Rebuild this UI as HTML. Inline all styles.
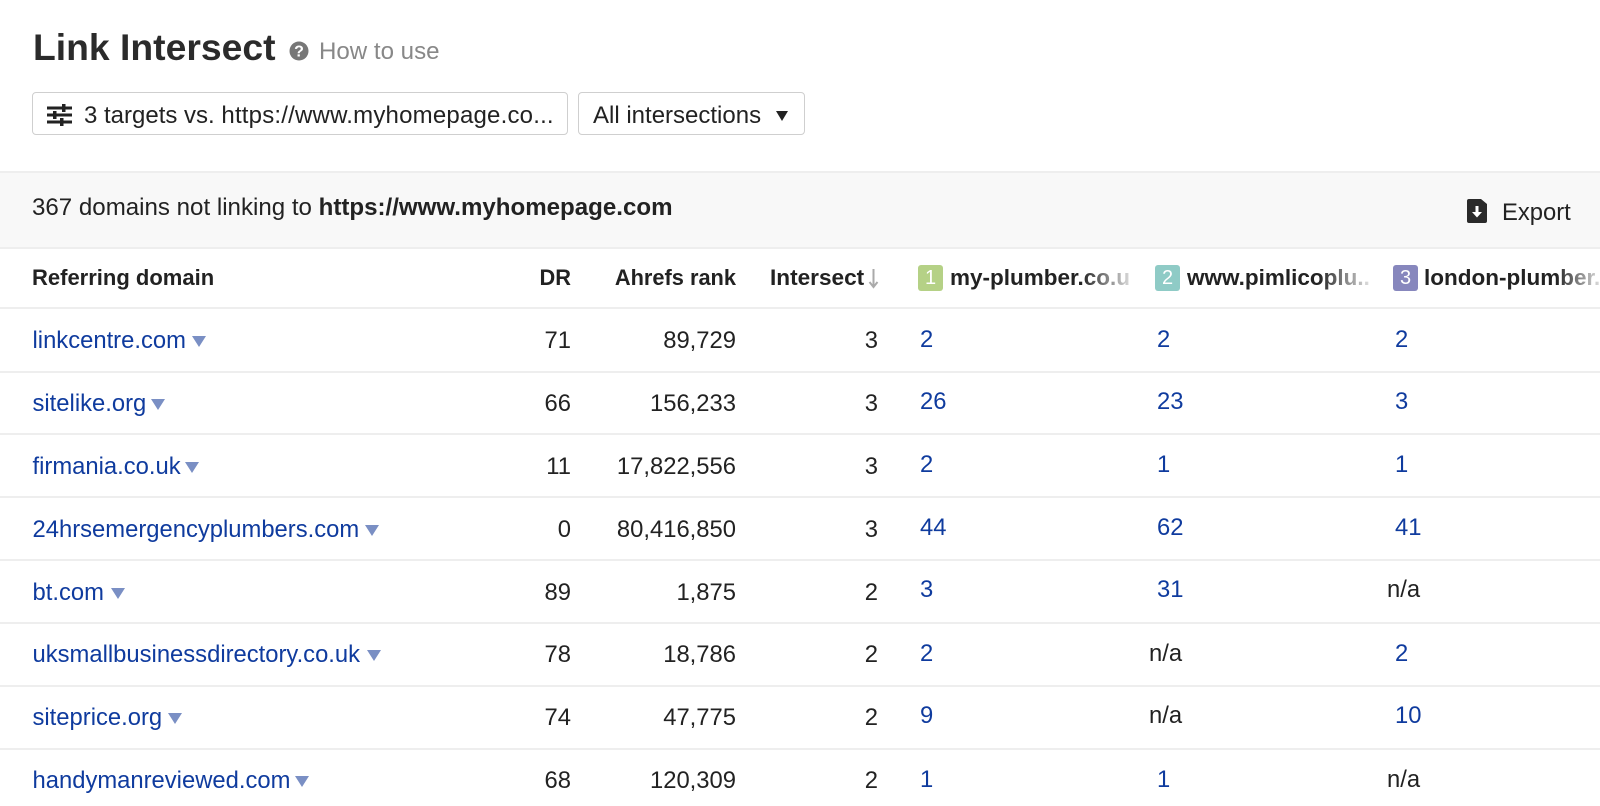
<!DOCTYPE html>
<html>
<head>
<meta charset="utf-8">
<style>
html,body{margin:0;padding:0;background:#fff}
#p{position:relative;width:1600px;height:806px;overflow:hidden;background:#fff;font-family:"Liberation Sans",sans-serif;color:#222;font-size:23.8px}
#p span,#p div{position:absolute;white-space:nowrap}
.t{line-height:30px;height:30px}
.l{left:0;width:1600px;height:2px;background:#eeeeee}
.a{color:#0f3b9e;left:32.500px}
.c{width:0;height:0;border-left:7px solid transparent;border-right:7px solid transparent;border-top:11px solid #7a8fc4}
.r{text-align:right;width:200px}
.h{font-weight:bold;font-size:21.8px;color:#222}
.n{color:#0f3b9e}
.b{width:25px;height:26px;border-radius:3px;color:#fff;font-size:20px;line-height:26px;text-align:center;top:265px}
.f{top:263px;font-weight:bold;font-size:22.5px;line-height:30px;height:30px;overflow:hidden;color:#222}
.f i{position:absolute;top:0;right:0;height:30px;width:50px;background:linear-gradient(to right,rgba(255,255,255,0),rgba(255,255,255,.85));display:block}
.btn{border:1.500px solid #cfcfcf;border-radius:4px;box-sizing:border-box;top:92px;height:43px;background:#fff}
</style>
</head>
<body>
<div id="p">
<span style="left:33px;top:24px;font-size:37.300px;font-weight:bold;line-height:46px;color:#2b2b2b">Link Intersect</span>
<svg style="position:absolute;left:289px;top:41px" width="20" height="20" viewBox="0 0 20 20"><circle cx="10" cy="10" r="9.500" fill="#777"/><text x="10" y="15.500" font-family="Liberation Sans" font-weight="bold" font-size="16" fill="#fff" text-anchor="middle">?</text></svg>
<span class="t" style="left:319px;top:37px;color:#888;font-size:24.100px">How to use</span>

<div class="btn" style="left:32px;width:536px"></div>
<svg style="position:absolute;left:47px;top:104px" width="26" height="22" viewBox="0 0 26 22" fill="#222"><rect x="0" y="2.500" width="25" height="3"/><rect x="0" y="9.500" width="25" height="3"/><rect x="0" y="16.500" width="25" height="3"/><rect x="15" y="0" width="3.500" height="8"/><rect x="6" y="7" width="3.500" height="8"/><rect x="13" y="14" width="3.500" height="8"/></svg>
<span class="t" style="left:84px;top:101px;font-size:24px">3 targets vs. <span style="position:static;letter-spacing:.2px">https://www.myhomepage.co...</span></span>
<div class="btn" style="left:578px;width:227px"></div>
<span class="t" style="left:593px;top:101px;font-size:24px">All intersections</span>
<div style="left:776px;top:111px;width:0;height:0;border-left:6.500px solid transparent;border-right:6.500px solid transparent;border-top:10px solid #222"></div>

<div style="left:0;top:171px;width:1600px;height:76px;background:#f8f8f8"></div>
<div class="l" style="top:171px"></div>
<div class="l" style="top:247px"></div>
<span class="t" style="left:32px;top:193px;font-size:24.100px">367 domains not linking to <b style="font-size:24.100px">https://www.myhomepage.com</b></span>
<svg style="position:absolute;left:1467px;top:199px" width="20" height="24" viewBox="0 0 20 24"><path d="M2 0H14L20 5V22a2 2 0 0 1-2 2H2a2 2 0 0 1-2-2V2a2 2 0 0 1 2-2Z" fill="#2a2a2a"/><path d="M8.500 7h3v6h3.500l-5 5.500-5-5.500h3.500Z" fill="#fff"/></svg>
<span class="t" style="left:1502px;top:198px">Export</span>

<span class="t h" style="left:32px;top:263px;font-size:22px">Referring domain</span>
<span class="t h r" style="left:371px;top:263px">DR</span>
<span class="t h r" style="left:536px;top:263px">Ahrefs rank</span>
<span class="t h" style="left:770px;top:263px;font-size:22.600px">Intersect</span>
<svg style="position:absolute;left:867px;top:269px" width="13" height="20" viewBox="0 0 13 20"><path d="M6.500 0V17M2.500 13L6.500 18 10.500 13" fill="none" stroke="#aaa" stroke-width="2"/></svg>
<div class="b" style="left:918px;background:#b5d186">1</div>
<div class="f" style="left:950px;width:181px">my-plumber.co.uk<i></i></div>
<div class="b" style="left:1155px;background:#8fcbc6">2</div>
<div class="f" style="left:1187px;width:182px">www.pimlicoplu..<i></i></div>
<div class="b" style="left:1393px;background:#8787bd">3</div>
<div class="f" style="left:1424px;width:176px">london-plumber..<i style="width:44px"></i></div>

<div class="l" style="top:307px"></div>
<div class="l" style="top:371px"></div>
<div class="l" style="top:433px"></div>
<div class="l" style="top:496px"></div>
<div class="l" style="top:559px"></div>
<div class="l" style="top:622px"></div>
<div class="l" style="top:685px"></div>
<div class="l" style="top:748px"></div>

<span class="t a" style="top:325.500px">linkcentre.com</span><div class="c" style="left:192px;top:336px"></div>
<span class="t r" style="left:371px;top:325.500px">71</span><span class="t r" style="left:536px;top:325.500px">89,729</span><span class="t r" style="left:678px;top:325.500px">3</span>
<span class="t n" style="left:920px;top:324.500px">2</span><span class="t n" style="left:1157px;top:324.500px">2</span><span class="t n" style="left:1395px;top:324.500px">2</span>

<span class="t a" style="top:388.500px">sitelike.org</span><div class="c" style="left:151px;top:399px"></div>
<span class="t r" style="left:371px;top:388.500px">66</span><span class="t r" style="left:536px;top:388.500px">156,233</span><span class="t r" style="left:678px;top:388.500px">3</span>
<span class="t n" style="left:920px;top:386.500px">26</span><span class="t n" style="left:1157px;top:386.500px">23</span><span class="t n" style="left:1395px;top:386.500px">3</span>

<span class="t a" style="top:451.500px">firmania.co.uk</span><div class="c" style="left:185px;top:462px"></div>
<span class="t r" style="left:371px;top:451.500px">11</span><span class="t r" style="left:536px;top:451.500px">17,822,556</span><span class="t r" style="left:678px;top:451.500px">3</span>
<span class="t n" style="left:920px;top:449.500px">2</span><span class="t n" style="left:1157px;top:449.500px">1</span><span class="t n" style="left:1395px;top:449.500px">1</span>

<span class="t a" style="top:514.500px">24hrsemergencyplumbers.com</span><div class="c" style="left:365px;top:525px"></div>
<span class="t r" style="left:371px;top:514.500px">0</span><span class="t r" style="left:536px;top:514.500px">80,416,850</span><span class="t r" style="left:678px;top:514.500px">3</span>
<span class="t n" style="left:920px;top:512.500px">44</span><span class="t n" style="left:1157px;top:512.500px">62</span><span class="t n" style="left:1395px;top:512.500px">41</span>

<span class="t a" style="top:577.500px">bt.com</span><div class="c" style="left:111px;top:588px"></div>
<span class="t r" style="left:371px;top:577.500px">89</span><span class="t r" style="left:536px;top:577.500px">1,875</span><span class="t r" style="left:678px;top:577.500px">2</span>
<span class="t n" style="left:920px;top:575px">3</span><span class="t n" style="left:1157px;top:575px">31</span><span class="t" style="left:1387px;top:575px">n/a</span>

<span class="t a" style="top:639.500px">uksmallbusinessdirectory.co.uk</span><div class="c" style="left:367px;top:650px"></div>
<span class="t r" style="left:371px;top:639.500px">78</span><span class="t r" style="left:536px;top:639.500px">18,786</span><span class="t r" style="left:678px;top:639.500px">2</span>
<span class="t n" style="left:920px;top:638.500px">2</span><span class="t" style="left:1149px;top:638.500px">n/a</span><span class="t n" style="left:1395px;top:638.500px">2</span>

<span class="t a" style="top:702.500px">siteprice.org</span><div class="c" style="left:168px;top:713px"></div>
<span class="t r" style="left:371px;top:702.500px">74</span><span class="t r" style="left:536px;top:702.500px">47,775</span><span class="t r" style="left:678px;top:702.500px">2</span>
<span class="t n" style="left:920px;top:700.500px">9</span><span class="t" style="left:1149px;top:700.500px">n/a</span><span class="t n" style="left:1395px;top:700.500px">10</span>

<span class="t a" style="top:765.500px">handymanreviewed.com</span><div class="c" style="left:295px;top:776px"></div>
<span class="t r" style="left:371px;top:765.500px">68</span><span class="t r" style="left:536px;top:765.500px">120,309</span><span class="t r" style="left:678px;top:765.500px">2</span>
<span class="t n" style="left:920px;top:764.500px">1</span><span class="t n" style="left:1157px;top:764.500px">1</span><span class="t" style="left:1387px;top:764.500px">n/a</span>
</div>
</body>
</html>
